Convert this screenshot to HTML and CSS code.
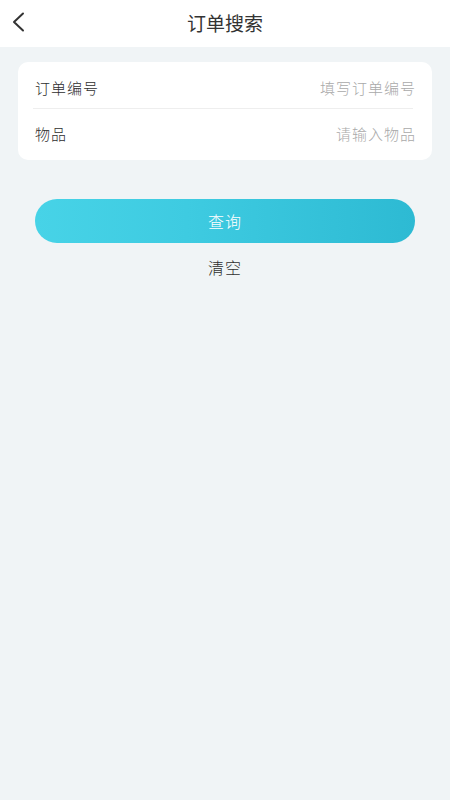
FILE: index.html
```html
<!DOCTYPE html>
<html lang="zh">
<head>
<meta charset="utf-8">
<link rel="stylesheet" href="styles.css">
</head>
<body>
<header class="nav">
  <span class="back"><svg width="14" height="20" viewBox="0 0 14 20"><path d="M12 1.5 L3 10 L12 18.5" fill="none" stroke="#333" stroke-width="2" stroke-linecap="round" stroke-linejoin="round"/></svg></span>
  <h1 class="title">订单搜索</h1>
</header>
<main class="content">
  <section class="card">
    <div class="row">
      <span class="label">订单编号</span>
      <span class="placeholder">填写订单编号</span>
    </div>
    <div class="row">
      <span class="label">物品</span>
      <span class="placeholder">请输入物品</span>
    </div>
  </section>
  <div class="actions">
    <button class="btn-primary">查询</button>
    <button class="btn-text">清空</button>
  </div>
</main>
</body>
</html>
```
FILE: styles.css
```css
* { box-sizing: border-box; }
html, body { margin: 0; padding: 0; }
body {
  width: 450px;
  height: 800px;
  background: #f0f4f6;
  font-family: "Noto Sans CJK SC", "Noto Sans", sans-serif;
  color: #333;
}
.nav {
  height: 47px;
  background: #fff;
  display: flex;
  align-items: center;
  justify-content: center;
  position: relative;
}
.back {
  position: absolute;
  left: 11px;
  top: 12px;
  width: 14px;
  height: 20px;
  display: flex;
}
.title {
  margin: 0;
  font-size: 19px;
  font-weight: 400;
  color: #333;
  letter-spacing: 0;
  line-height: 1;
  margin-top: -2px;
}
.content {
  padding: 15px 18px 0;
}
.card {
  background: #fff;
  border-radius: 10px;
  padding: 0 19px 0 15px;
}
.row {
  height: 51px;
  display: flex;
  align-items: center;
  justify-content: space-between;
  font-size: 15px;
  font-weight: 300;
  letter-spacing: 1px;
  padding: 0 0 0 2px;
}
.row:first-child {
  height: 47px;
  border-bottom: 1px solid #eeeeee;
  padding-top: 4px;
}
.row:last-child { padding-bottom: 2px; }
.label { color: #2e2e2e; }
.placeholder { color: #a9a9a9; margin-right: -3px; }
.actions {
  display: flex;
  flex-direction: column;
  align-items: center;
  padding: 39px 17px 0;
}
.btn-primary {
  width: 100%;
  height: 44px;
  border: none;
  border-radius: 22px;
  background: linear-gradient(90deg, #47d3e7 0%, #3ecbe1 40%, #2dbad3 100%);
  color: #fff;
  font-family: inherit;
  font-size: 16px;
  font-weight: 300;
  letter-spacing: 1px;
  padding: 0;
}
.btn-text {
  margin-top: 12px;
  border: none;
  background: none;
  color: #2e2e2e;
  font-family: inherit;
  font-size: 16px;
  font-weight: 300;
  letter-spacing: 1px;
  padding: 0;
  line-height: 24px;
}
```
